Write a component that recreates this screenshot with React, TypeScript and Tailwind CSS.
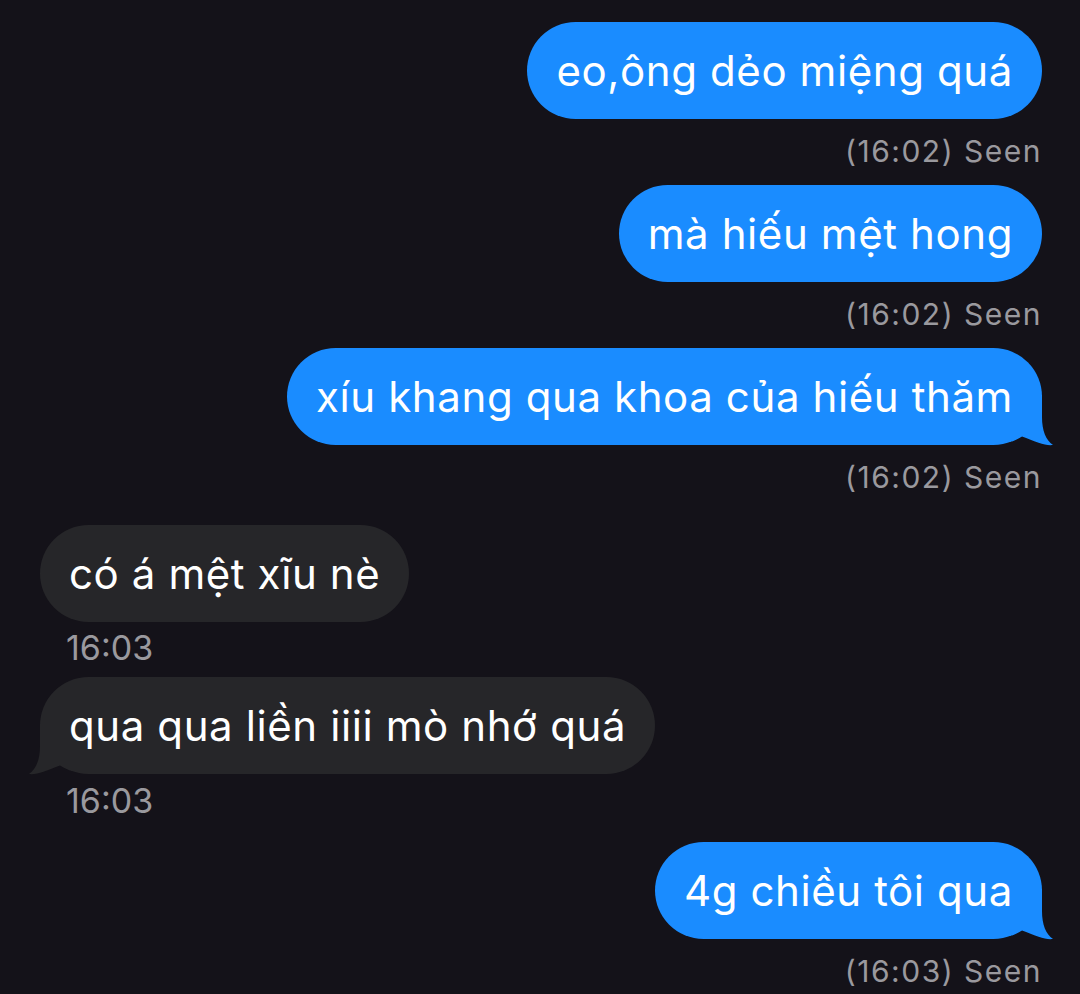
type Message = {
  id: number;
  mine: boolean;
  text: string;
  meta: string;
  tail: boolean;
  spacing: string;
  metaTop: string;
};

const messages: Message[] = [
  { id: 1, mine: true, text: 'eo,ông dẻo miệng quá', meta: '(16:02) Seen', tail: false, spacing: 'mt-[22px] mb-[14px]', metaTop: 'mt-[12px]' },
  { id: 2, mine: true, text: 'mà hiếu mệt hong', meta: '(16:02) Seen', tail: false, spacing: 'mb-[14px]', metaTop: 'mt-[12px]' },
  { id: 3, mine: true, text: 'xíu khang qua khoa của hiếu thăm', meta: '(16:02) Seen', tail: true, spacing: 'mb-[28px]', metaTop: 'mt-[12px]' },
  { id: 4, mine: false, text: 'có á mệt xĩu nè', meta: '16:03', tail: false, spacing: 'mb-[9px]', metaTop: 'mt-[6px]' },
  { id: 5, mine: false, text: 'qua qua liền iiii mò nhớ quá', meta: '16:03', tail: true, spacing: 'mb-[21px]', metaTop: 'mt-[7px]' },
  { id: 6, mine: true, text: '4g chiều tôi qua', meta: '(16:03) Seen', tail: true, spacing: 'mb-0', metaTop: 'mt-[12px]' },
];

const Tail = ({ mine, color }: { mine: boolean; color: string }) => (
  <svg
    width="44"
    height="52"
    viewBox="0 0 44 52"
    className={
      mine
        ? 'absolute bottom-[-2px] right-[-14px]'
        : 'absolute bottom-[-2px] left-[-14px] -scale-x-100'
    }
  >
    <path
      d="M30 0 L30 22 C30 36 34 45 41 50 C33 51 25 47 10 41.5 Q5 44.5 0 46.5 L0 0 Z"
      fill={color}
    />
  </svg>
);

const App = () => {
  return (
    <div className="min-h-[994px] w-[1080px] overflow-hidden bg-[#141219] font-['Inter','Liberation_Sans',sans-serif]">
      {messages.map((m) => (
        <div
          key={m.id}
          className={`flex flex-col ${m.mine ? 'items-end pr-[38px]' : 'items-start pl-[40px]'} ${m.spacing}`}
        >
          <div
            className={`relative flex h-[97px] items-center rounded-full px-[29px] text-[42px] tracking-[0.6px] text-white ${
              m.mine ? 'bg-[#1a8cff]' : 'bg-[#262629]'
            }`}
          >
            <span className="relative z-10">{m.text}</span>
            {m.tail ? <Tail mine={m.mine} color={m.mine ? '#1a8cff' : '#262629'} /> : null}
          </div>
          {m.mine ? (
            <div className={`${m.metaTop} text-[30px] leading-[40px] tracking-[1.5px] text-[#9a999e]`}>
              {m.meta}
            </div>
          ) : (
            <div className={`${m.metaTop} pl-[26px] text-[34px] leading-[40px] text-[#9a999e]`}>
              {m.meta}
            </div>
          )}
        </div>
      ))}
    </div>
  );
};

export default App;
